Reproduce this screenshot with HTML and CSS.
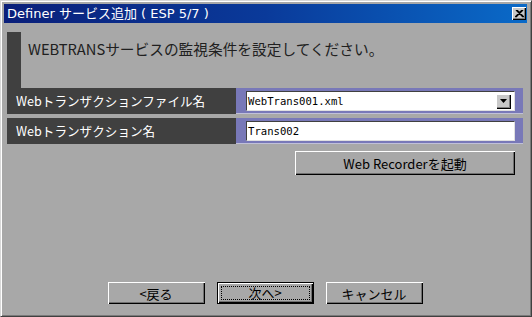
FILE: index.html
```html
<!DOCTYPE html>
<html lang="ja">

<head>
    <meta charset="UTF-8">
    <title>Definer サービス追加</title>
    <link rel="stylesheet" href="styles.css">
</head>

<body>
    <div class="window">
        <div class="titlebar">
            <span class="title">Definer サービス追加 ( ESP 5/7 )</span>
            <span class="close-button">
                <svg width="9" height="8" viewBox="0 0 9 8">
                    <path d="M1 0 L8 7 M2 0 L9 7 M8 0 L1 7 M7 0 L0 7" stroke="#000" stroke-width="1.2" fill="none"/>
                </svg>
            </span>
        </div>

        <div class="content">
            <div class="heading">
                <div class="marker"></div>
                <p>WEBTRANSサービスの監視条件を設定してください。</p>
            </div>

            <div class="form-row">
                <div class="label">Webトランザクションファイル名</div>
                <div class="field">
                    <div class="input select">
                        <span>WebTrans001.xml</span>
                        <span class="drop-button">
                            <svg width="7" height="4" viewBox="0 0 7 4"><path d="M0 0 H7 L3.5 4 Z" fill="#000"/></svg>
                        </span>
                    </div>
                </div>
            </div>

            <div class="form-row row-two">
                <div class="label">Webトランザクション名</div>
                <div class="field">
                    <div class="input">Trans002</div>
                </div>
            </div>

            <div class="tool-row">
                <button class="win-button recorder-button">Web Recorderを起動</button>
            </div>

            <div class="button-row">
                <button class="win-button">&lt;戻る</button>
                <button class="win-button default-button"><span class="focus">次へ&gt;</span></button>
                <button class="win-button">キャンセル</button>
            </div>
        </div>
    </div>
</body>

</html>
```

FILE: styles.css
```css
body {
    margin: 0;
    font-family: "Noto Sans CJK JP", "DejaVu Sans", sans-serif;
}

.window {
    width: 532px;
    height: 317px;
    box-sizing: border-box;
    background-color: #a8a8a8;
    border-top: 1px solid #d8d8d8;
    border-left: 1px solid #d8d8d8;
    border-right: 1px solid #404040;
    border-bottom: 1px solid #404040;
    box-shadow: inset 1px 1px 0 #ffffff, inset -1px -1px 0 #7a7a7a;
    padding: 3px 4px 3px 3px;
    display: flex;
    flex-direction: column;
}

.titlebar {
    height: 19px;
    background: linear-gradient(to right, #0a1f7a, #0a3a9a 50%, #0a6ac8);
    display: flex;
    align-items: center;
    justify-content: space-between;
    padding: 0 1px 0 3px;
}

.title {
    color: #fff;
    font-family: "DejaVu Sans", "Noto Sans CJK JP", sans-serif;
    font-size: 13px;
    line-height: 19px;
}

.close-button {
    width: 14px;
    height: 13px;
    background-color: #c8c8c8;
    box-shadow: inset 1px 1px 0 #ffffff, inset -1px -1px 0 #000000, inset -2px -2px 0 #808080;
    display: flex;
    align-items: center;
    justify-content: center;
}

.content {
    flex: 1;
    display: flex;
    flex-direction: column;
    padding: 9px 4px 0 3px;
}

.heading {
    display: flex;
    height: 56px;
}

.marker {
    width: 14px;
    background-color: #404040;
}

.heading p {
    margin: 0;
    padding: 8px 0 0 7px;
    font-size: 14.7px;
    line-height: 18px;
    color: #202020;
}

.form-row {
    display: flex;
    height: 26px;
}

.row-two {
    margin-top: 4px;
}

.label {
    width: 220px;
    background-color: #404040;
    color: #fff;
    font-size: 12.6px;
    line-height: 26px;
    padding-left: 9px;
}

.field {
    flex: 1;
    background-color: #7878b8;
    padding: 3px 8px 2px 10px;
    border-bottom: 1px solid #c0c0d8;
    box-sizing: border-box;
}

.input {
    height: 100%;
    box-sizing: border-box;
    background-color: #fff;
    border-top: 1px solid #404040;
    border-left: 1px solid #404040;
    border-right: 1px solid #e0e0e0;
    border-bottom: 1px solid #e0e0e0;
    font-family: "DejaVu Sans Mono", monospace;
    font-size: 10.6px;
    line-height: 19px;
    padding-left: 1px;
    color: #000;
}

.select {
    display: flex;
    justify-content: space-between;
    align-items: center;
    padding-right: 3px;
}

.drop-button {
    width: 15px;
    height: 15px;
    background-color: #c8c8c8;
    box-shadow: inset 1px 1px 0 #ffffff, inset -1px -1px 0 #000000, inset -2px -2px 0 #808080;
    display: flex;
    align-items: center;
    justify-content: center;
}

.tool-row {
    display: flex;
    justify-content: flex-end;
    margin-top: 7px;
    padding-right: 8px;
}

.win-button {
    background-color: #a8a8a8;
    border: none;
    font-family: "Noto Sans CJK JP", sans-serif;
    font-size: 13px;
    color: #000;
    box-shadow: inset 1px 1px 0 #ffffff, inset -1px -1px 0 #000000, inset -2px -2px 0 #707070;
    padding: 0;
}

.recorder-button {
    width: 220px;
    height: 24px;
}

.button-row {
    margin-top: auto;
    margin-bottom: 9px;
    display: flex;
    justify-content: center;
    gap: 12px;
}

.button-row .win-button {
    width: 97px;
    height: 22px;
}

.default-button {
    box-shadow: inset 0 0 0 1px #000000, inset 2px 2px 0 #ffffff, inset -2px -2px 0 #000000, inset -3px -3px 0 #707070;
    padding: 4px;
}

.focus {
    display: block;
    height: 100%;
    box-sizing: border-box;
    border: 1px dotted #000;
    line-height: 12px;
}
```
